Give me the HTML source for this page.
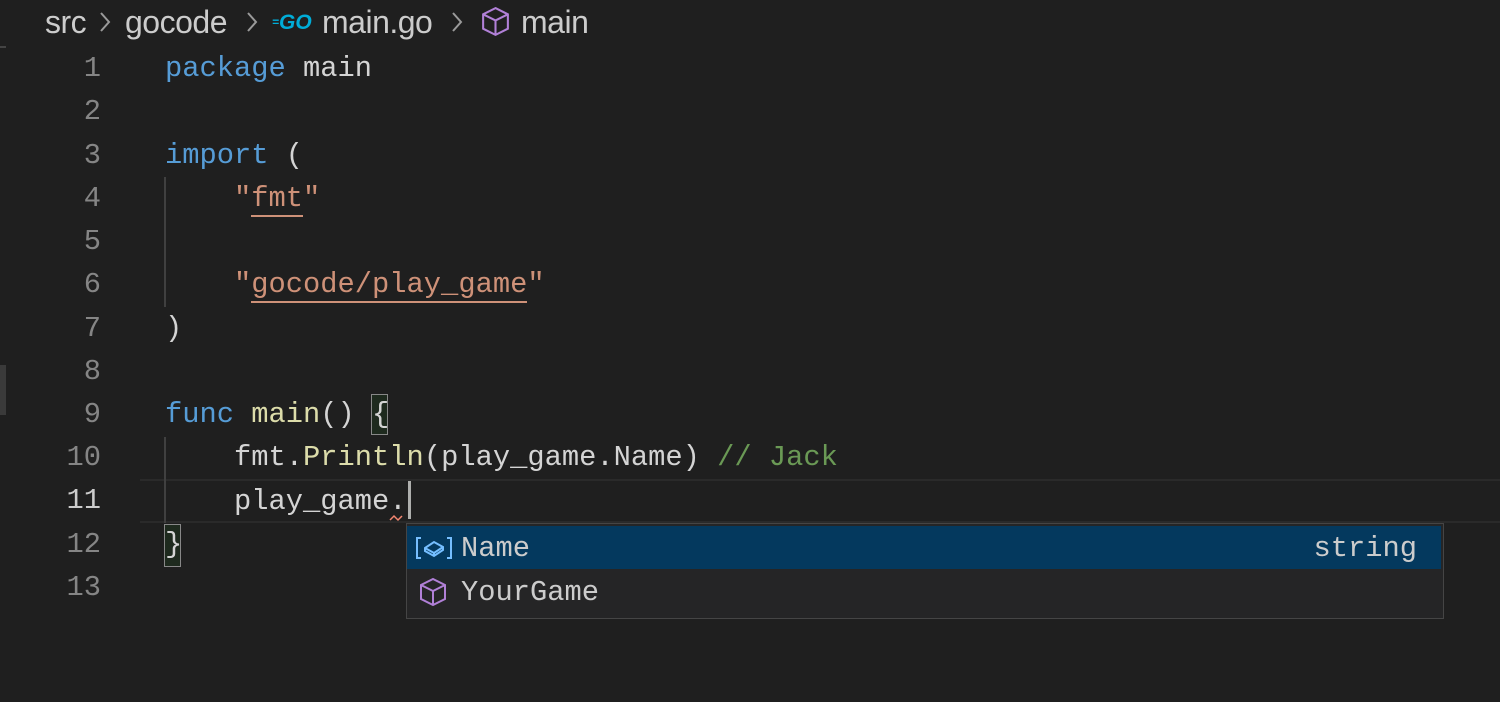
<!DOCTYPE html><html><head><style>
body{margin:0;width:1500px;height:702px;background:#1f1f1f;overflow:hidden;position:relative;font-family:"Liberation Mono",monospace;}
.bc{position:absolute;top:2px;font-family:"Liberation Sans",sans-serif;font-size:32px;color:#cccccc;white-space:nowrap;line-height:40px;letter-spacing:-0.5px}
.sep{position:absolute;top:10px}
.ln{position:absolute;left:0;width:101px;text-align:right;color:#858585;font-size:28.75px;line-height:43.25px}
.code{position:absolute;left:165px;font-size:28.75px;line-height:43.25px;color:#d4d4d4;white-space:pre}
.k{color:#569cd6}.s{color:#ce9178}.f{color:#dcdcaa}.c{color:#6a9955}
.u{border-bottom:2px solid #ce9178;}
</style></head><body>
<div style="position:absolute;left:0;top:46px;width:6px;height:2px;background:#444"></div>
<div style="position:absolute;left:0;top:365px;width:6px;height:50px;background:#3a3a3a"></div>
<div class="bc" style="left:45px">src</div>
<svg class="sep" style="left:98px" width="14" height="24" viewBox="0 0 14 24"><path d="M3 3l8 9-8 9" stroke="#9a9a9a" stroke-width="2" fill="none"/></svg>
<div class="bc" style="left:125px">gocode</div>
<svg class="sep" style="left:245px" width="14" height="24" viewBox="0 0 14 24"><path d="M3 3l8 9-8 9" stroke="#9a9a9a" stroke-width="2" fill="none"/></svg>
<div style="position:absolute;left:272px;top:10px;font-family:'Liberation Sans',sans-serif;font-style:italic;font-weight:bold;font-size:21px;color:#00add8;line-height:24px"><span style="font-size:12px;vertical-align:3px">=</span>GO</div>
<div class="bc" style="left:322px">main.go</div>
<svg class="sep" style="left:450px" width="14" height="24" viewBox="0 0 14 24"><path d="M3 3l8 9-8 9" stroke="#9a9a9a" stroke-width="2" fill="none"/></svg>
<svg style="position:absolute;left:479px;top:5px" width="33" height="33" viewBox="0 0 16 16" fill="none" stroke="#b180d7" stroke-width="1"><path d="M8 1.5l6 3v7l-6 3-6-3v-7z M2 4.5l6 3 6-3 M8 7.5v7"/></svg>
<div class="bc" style="left:521px">main</div>
<!-- current line -->
<div style="position:absolute;left:140px;top:479px;width:1360px;height:40px;border-top:2px solid #2a2a2a;border-bottom:2px solid #2a2a2a"></div>
<div style="position:absolute;left:164px;top:177px;width:2px;height:130px;background:#404040"></div>
<div style="position:absolute;left:164px;top:437px;width:2px;height:86px;background:#404040"></div>
<div style="position:absolute;left:371px;top:394px;width:17px;height:41px;border:1px solid #888;box-sizing:border-box;background:#1e2a1e"></div>
<div style="position:absolute;left:164px;top:524px;width:17px;height:43px;border:1px solid #888;box-sizing:border-box;background:#1e2a1e"></div>
<div class="ln" style="top:47px">1</div><div class="ln" style="top:90px">2</div><div class="ln" style="top:134px">3</div><div class="ln" style="top:177px">4</div><div class="ln" style="top:220px">5</div><div class="ln" style="top:263px">6</div><div class="ln" style="top:307px">7</div><div class="ln" style="top:350px">8</div><div class="ln" style="top:393px">9</div><div class="ln" style="top:436px">10</div><div class="ln" style="top:479px;color:#cccccc">11</div><div class="ln" style="top:523px">12</div><div class="ln" style="top:566px">13</div>
<div class="code" style="top:47px"><span class="k">package</span> main
 
<span class="k">import</span> (
    <span class="s">"<span class="u">fmt</span>"</span>
 
    <span class="s">"<span class="u">gocode/play_game</span>"</span>
)
 
<span class="k">func</span> <span class="f">main</span>() {
    fmt.<span class="f">Println</span>(play_game.Name) <span class="c">// Jack</span>
    play_game.
}
</div>
<div style="position:absolute;left:408px;top:481px;width:3px;height:38px;background:#aeafad"></div>
<svg style="position:absolute;left:389px;top:514px" width="18" height="8"><path d="M1 6l4-4 4 4 4-4" stroke="#f48771" stroke-width="1.5" fill="none"/></svg>
<div style="position:absolute;left:406px;top:523px;width:1038px;height:96px;background:#252526;border:1px solid #454545;box-sizing:border-box;font-size:28.75px;color:#cccccc">
<div style="position:absolute;left:0;top:2px;width:1034px;height:43px;background:#04395e"></div>
<svg style="position:absolute;left:8px;top:11px" width="38" height="26" viewBox="0 0 38 26" fill="none" stroke="#75beff" stroke-width="2"><path d="M6 3H2v20h4M32 3h4v20h-4"/><path d="M10 13l9-6 9 5v3l-9 6-9-5z M10 13l9 5 9-6 M19 18v3"/></svg>
<div style="position:absolute;left:54px;top:3px;line-height:43px">Name</div>
<div style="position:absolute;right:26px;top:3px;line-height:43px">string</div>
<svg style="position:absolute;left:10px;top:52px" width="32" height="32" viewBox="0 0 16 16" fill="none" stroke="#b180d7" stroke-width="1"><path d="M8 1.5l6 3v7l-6 3-6-3v-7z M2 4.5l6 3 6-3 M8 7.5v7"/></svg>
<div style="position:absolute;left:54px;top:47px;line-height:43px">YourGame</div>
</div>
</body></html>
